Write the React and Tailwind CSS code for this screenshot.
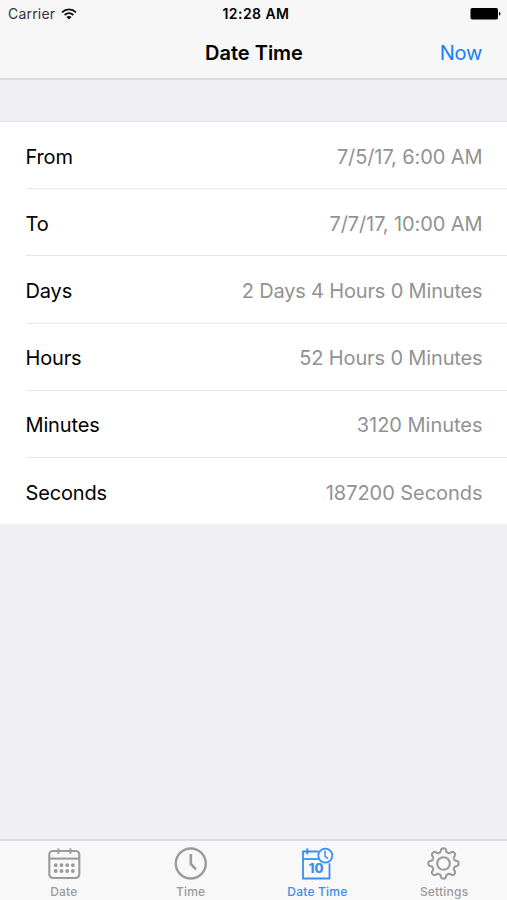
import { useState } from "react";

const rows = [
  { label: "From", value: "7/5/17, 6:00 AM", spacing: "tracking-[-0.1px]" },
  { label: "To", value: "7/7/17, 10:00 AM", spacing: "tracking-[-0.1px]" },
  { label: "Days", value: "2 Days 4 Hours 0 Minutes", spacing: "tracking-[-0.17px]" },
  { label: "Hours", value: "52 Hours 0 Minutes", spacing: "tracking-[-0.14px]" },
  { label: "Minutes", value: "3120 Minutes", spacing: "tracking-[-0.02px]" },
  { label: "Seconds", value: "187200 Seconds", spacing: "tracking-[-0.05px]" },
];

// outline of the settings cog, eight rounded teeth
function gearPath() {
  const points = [];
  for (let i = 0; i < 240; i++) {
    const angle = (i / 240) * Math.PI * 2;
    const r = 13.3 + 1.8 * (Math.tanh(1.8 * Math.cos(8 * angle)) / Math.tanh(1.8));
    points.push(
      `${(17.5 + r * Math.sin(angle)).toFixed(2)} ${(17.5 - r * Math.cos(angle)).toFixed(2)}`
    );
  }
  return "M" + points.join("L") + "Z";
}

function DateIcon() {
  return (
    <svg width="36" height="36" viewBox="0 0 36 36" fill="none" stroke="currentColor">
      <rect x="3.3" y="5" width="30" height="27" rx="3.5" strokeWidth="2.1" />
      <path d="M3.3 12.6H33.3" strokeWidth="2.1" />
      <path d="M12.4 2.5V7.7M24.4 2.5V7.7" strokeWidth="2.1" />
      <path
        d="M9.7 19.2H9.71M15.5 19.2H15.51M21.2 19.2H21.21M26.9 19.2H26.91M9.7 25H9.71M15.5 25H15.51M21.2 25H21.21M26.9 25H26.91"
        strokeWidth="3.8"
        strokeLinecap="round"
      />
    </svg>
  );
}

function TimeIcon() {
  return (
    <svg width="36" height="36" viewBox="0 0 36 36" fill="none" stroke="currentColor">
      <circle cx="17.8" cy="17.5" r="15" strokeWidth="2.4" />
      <path d="M17.8 8V18L23 23.3" strokeWidth="2.6" />
    </svg>
  );
}

function DateTimeIcon() {
  return (
    <svg width="36" height="36" viewBox="0 0 36 36" fill="none" stroke="currentColor">
      <path d="M19.5 5.5H4V32.5H30.5V17.3" strokeWidth="1.8" />
      <path d="M4 13H20" strokeWidth="1.8" />
      <path d="M8.3 2.4V8.3" strokeWidth="2" />
      <circle cx="26.3" cy="9.6" r="7" strokeWidth="1.8" />
      <path d="M26 4.8V10.1L28.8 12.6" strokeWidth="1.5" />
      <text
        x="17.2"
        y="27.4"
        textAnchor="middle"
        fontSize="13"
        fontWeight="800"
        fill="currentColor"
        stroke="none"
      >
        10
      </text>
    </svg>
  );
}

function SettingsIcon() {
  return (
    <svg width="36" height="36" viewBox="0 0 36 36" fill="none" stroke="currentColor">
      <path d={gearPath()} strokeWidth="2.1" strokeLinejoin="round" />
      <circle cx="17.5" cy="17.5" r="6.3" strokeWidth="2.1" />
    </svg>
  );
}

const tabs = [
  { name: "Date", Icon: DateIcon },
  { name: "Time", Icon: TimeIcon },
  { name: "Date Time", Icon: DateTimeIcon },
  { name: "Settings", Icon: SettingsIcon },
];

function StatusBar() {
  return (
    <div className="grid grid-cols-3 items-center h-[27px] pl-2 pr-[6px] text-[14px]">
      <div className="flex items-center gap-[6px] text-[#333]">
        <span className="tracking-[0.2px]">Carrier</span>
        <svg width="16" height="12" viewBox="0 0 16 12" fill="none" stroke="#111">
          <path d="M1 4.3C5 .4 11 .4 15 4.3" strokeWidth="1.8" />
          <path d="M3.6 7C6.2 4.6 9.8 4.6 12.4 7" strokeWidth="1.8" />
          <path d="M8 11.5L5.4 8.9C6.8 7.6 9.2 7.6 10.6 8.9Z" fill="#111" stroke="none" />
        </svg>
      </div>
      <span className="pl-[3px] text-center font-semibold tracking-[0.45px]">12:28 AM</span>
      <svg className="justify-self-end" width="31" height="14" viewBox="0 0 31 14">
        <rect x="0.5" y="1" width="27.5" height="11.5" rx="1.8" fill="black" />
        <path d="M29 5Q30.5 5 30.5 6.8T29 8.6Z" fill="black" />
      </svg>
    </div>
  );
}

function App() {
  const [active, setActive] = useState("Date Time");

  return (
    <div className="flex flex-col w-full h-screen overflow-hidden bg-[#efeff4] font-['Inter','Liberation_Sans',sans-serif] text-black">
      <header className="h-20 shrink-0 bg-[#f7f7f8] border-b-2 border-[#dcdcde]">
        <StatusBar />
        <div className="grid grid-cols-3 items-center h-[51px] px-[25px]">
          <h1 className="col-start-2 pl-px text-center text-[20px] font-semibold whitespace-nowrap">
            Date Time
          </h1>
          <button className="justify-self-end text-[20px] tracking-[-0.3px] text-[#1580fb]">Now</button>
        </div>
      </header>

      {/* results */}
      <ul className="mt-[41px] shrink-0 bg-white border-t border-[#e2e2e6]">
        {rows.map((row) => (
          <li key={row.label} className="group pl-[25.5px]">
            <div className="flex items-center justify-between h-[67.2px] pr-[24.5px] pt-[3px] text-[20px] border-b border-[#e6e6e8] group-last:h-[66px] group-last:pt-[4px] group-last:border-b-0">
              <span className="tracking-[-0.15px]">{row.label}</span>
              <span className={"text-[#929292] " + row.spacing}>{row.value}</span>
            </div>
          </li>
        ))}
      </ul>

      {/* tab bar */}
      <nav className="mt-auto h-[61px] shrink-0 grid grid-cols-4 bg-[#f8f8f9] border-t-2 border-[#dcdce0]">
        {tabs.map(({ name, Icon }) => (
          <button
            key={name}
            onClick={() => setActive(name)}
            className={
              name === active
                ? "flex flex-col items-center pt-[5px] pl-px text-[#3b8eed]"
                : "flex flex-col items-center pt-[5px] pl-px text-[#9b9b9b]"
            }
          >
            <Icon />
            <span className="mt-[2px] text-[12px] leading-4 font-medium tracking-[0.2px]">{name}</span>
          </button>
        ))}
      </nav>
    </div>
  );
}

export default App;
